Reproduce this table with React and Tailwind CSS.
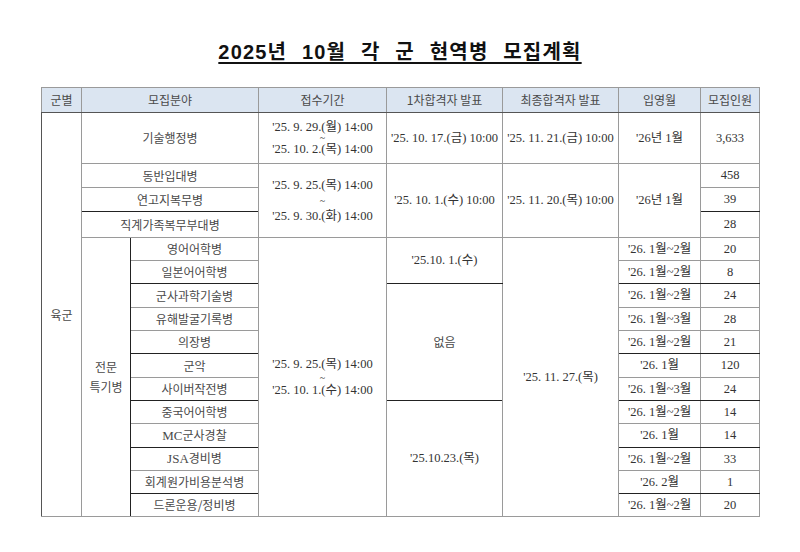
import React from 'react'

const B = 'border border-[#9a9a9a]'
const cell = `${B} text-center align-middle px-0 leading-[1.15]`
const ko = "font-['Noto_Sans_CJK_KR',sans-serif] text-[12px] text-[#4a4a4a]"

const specialty = [
  { name: '영어어학병', month: "'26. 1월~2월", n: '20', dark: false },
  { name: '일본어어학병', month: "'26. 1월~2월", n: '8', dark: true },
  { name: '군사과학기술병', month: "'26. 1월~2월", n: '24', dark: false },
  { name: '유해발굴기록병', month: "'26. 1월~3월", n: '28', dark: false },
  { name: '의장병', month: "'26. 1월~2월", n: '21', dark: true },
  { name: '군악', month: "'26. 1월", n: '120', dark: false },
  { name: '사이버작전병', month: "'26. 1월~3월", n: '24', dark: true },
  { name: '중국어어학병', month: "'26. 1월~2월", n: '14', dark: false },
  { name: 'MC군사경찰', month: "'26. 1월", n: '14', dark: true },
  { name: 'JSA경비병', month: "'26. 1월~2월", n: '33', dark: false },
  { name: '회계원가비용분석병', month: "'26. 2월", n: '1', dark: true },
  { name: '드론운용/정비병', month: "'26. 1월~2월", n: '20', dark: false },
]

const rowH = ['h-[23px]', 'h-[23px]', 'h-[24px]', 'h-[23px]', 'h-[23px]', 'h-[24px]', 'h-[23px]', 'h-[23px]', 'h-[24px]', 'h-[23px]', 'h-[23px]', 'h-[23px]']

function Name({ name }) {
  if (name.startsWith('MC')) return <><span className="font-['Liberation_Serif',serif] text-[13px]">MC</span>군사경찰</>
  if (name.startsWith('JSA')) return <><span className="font-['Liberation_Serif',serif] text-[13px]">JSA</span>경비병</>
  return name
}

export default function App() {
  return (
    <div className="w-[800px] h-[552px] bg-white text-[#333] font-['Liberation_Serif','Noto_Sans_CJK_KR',serif] text-[12.5px]">
      <div className="pt-[42px] h-[87px] text-center">
        <h1 className="inline-block font-['Liberation_Sans','Noto_Sans_CJK_KR',sans-serif] font-bold text-[20px] text-[#111] underline underline-offset-[3px] decoration-[1.5px] tracking-[1.2px] [word-spacing:8px] leading-none">
          2025년 10월 각 군 현역병 모집계획
        </h1>
      </div>

      <table className="ml-[41px] w-[718px] table-fixed border-collapse border border-[#555]">
        <colgroup>
          <col className="w-[40px]" />
          <col className="w-[49px]" />
          <col className="w-[128px]" />
          <col className="w-[128px]" />
          <col className="w-[116px]" />
          <col className="w-[116px]" />
          <col className="w-[82px]" />
          <col className="w-[59px]" />
        </colgroup>
        <tbody>
          <tr className={`h-[25px] bg-[#dbe5f1] ${ko}`}>
            <td className={`${cell} border-b-[#555]`}>군별</td>
            <td colSpan={2} className={`${cell} border-b-[#555]`}>모집분야</td>
            <td className={`${cell} border-b-[#555]`}>접수기간</td>
            <td className={`${cell} border-b-[#555]`}>1차합격자 발표</td>
            <td className={`${cell} border-b-[#555]`}>최종합격자 발표</td>
            <td className={`${cell} border-b-[#555]`}>입영월</td>
            <td className={`${cell} border-b-[#555]`}>모집인원</td>
          </tr>

          <tr className="h-[51px]">
            <td rowSpan={16} className={`${cell} ${ko} border-l-[#555]`}>육군</td>
            <td colSpan={2} className={`${cell} ${ko}`}>기술행정병</td>
            <td className={cell}>
              <div>'25. 9. 29.(월) 14:00</div>
              <div className="text-[10px] leading-[0.8]">~</div>
              <div>'25. 10. 2.(목) 14:00</div>
            </td>
            <td className={cell}>'25. 10. 17.(금) 10:00</td>
            <td className={cell}>'25. 11. 21.(금) 10:00</td>
            <td className={cell}>'26년 1월</td>
            <td className={cell}>3,633</td>
          </tr>

          <tr className="h-[24px]">
            <td colSpan={2} className={`${cell} ${ko}`}>동반입대병</td>
            <td rowSpan={3} className={cell}>
              <div>'25. 9. 25.(목) 14:00</div>
              <div className="text-[10px] leading-[1.6]">~</div>
              <div>'25. 9. 30.(화) 14:00</div>
            </td>
            <td rowSpan={3} className={cell}>'25. 10. 1.(수) 10:00</td>
            <td rowSpan={3} className={cell}>'25. 11. 20.(목) 10:00</td>
            <td rowSpan={3} className={cell}>'26년 1월</td>
            <td className={cell}>458</td>
          </tr>
          <tr className="h-[24px]">
            <td colSpan={2} className={`${cell} ${ko} border-b-[#222]`}>연고지복무병</td>
            <td className={`${cell} border-b-[#222]`}>39</td>
          </tr>
          <tr className="h-[26px]">
            <td colSpan={2} className={`${cell} ${ko}`}>직계가족복무부대병</td>
            <td className={cell}>28</td>
          </tr>

          {specialty.map((s, i) => (
            <tr key={s.name} className={rowH[i]}>
              {i === 0 && (
                <td rowSpan={12} className={`${cell} ${ko} border-r-[#222]`}>
                  <div className="flex flex-col items-center gap-[6px]">
                    <span>전문</span>
                    <span>특기병</span>
                  </div>
                </td>
              )}
              <td className={`${cell} ${ko} ${s.dark ? 'border-b-[#222]' : ''}`}>
                <Name name={s.name} />
              </td>
              {i === 0 && (
                <td rowSpan={12} className={cell}>
                  <div>'25. 9. 25.(목) 14:00</div>
                  <div className="text-[10px] leading-[1.1]">~</div>
                  <div>'25. 10. 1.(수) 14:00</div>
                </td>
              )}
              {i === 0 && <td rowSpan={2} className={`${cell} border-b-[#222]`}>'25.10. 1.(수)</td>}
              {i === 2 && <td rowSpan={5} className={`${cell} ${ko} border-b-[#222]`}>없음</td>}
              {i === 7 && <td rowSpan={5} className={cell}>'25.10.23.(목)</td>}
              {i === 0 && <td rowSpan={12} className={cell}>'25. 11. 27.(목)</td>}
              <td className={`${cell} ${s.dark ? 'border-b-[#222]' : ''}`}>{s.month}</td>
              <td className={`${cell} ${s.dark ? 'border-b-[#222]' : ''}`}>{s.n}</td>
            </tr>
          ))}
        </tbody>
      </table>
    </div>
  )
}
